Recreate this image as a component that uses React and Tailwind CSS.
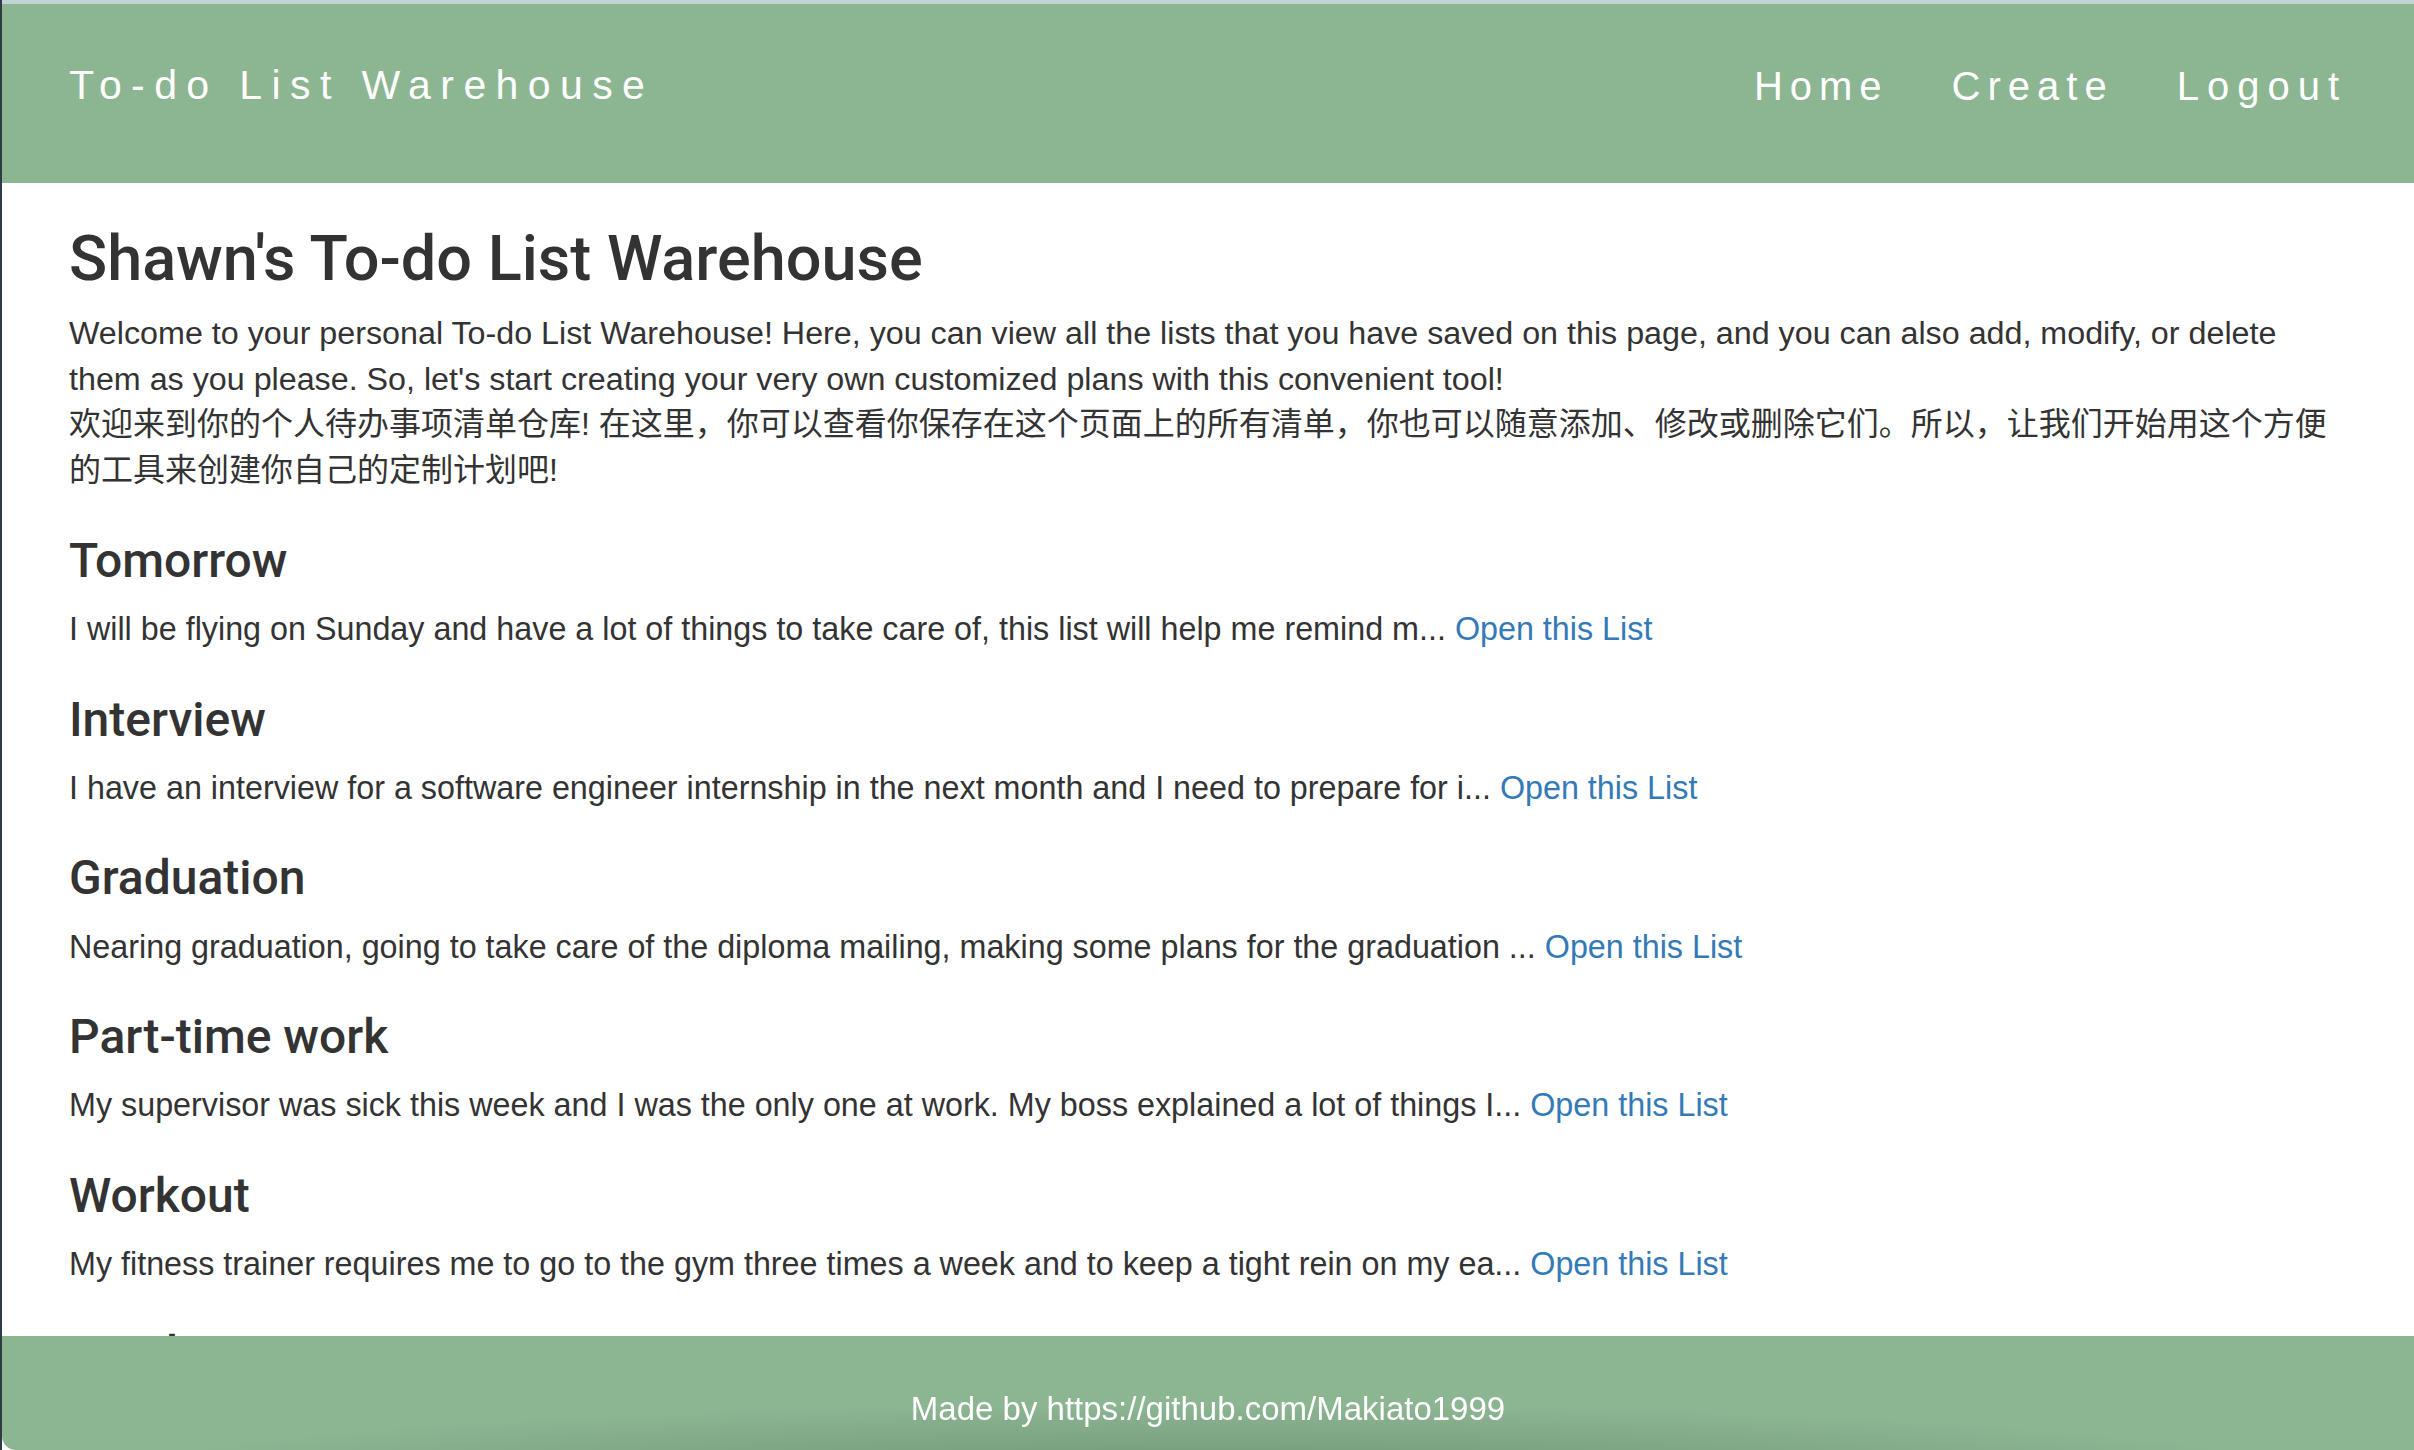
import React from "react";

const LISTS = [
	{
		title: "Tomorrow",
		summary:
			"I will be flying on Sunday and have a lot of things to take care of, this list will help me remind m...",
	},
	{
		title: "Interview",
		summary:
			"I have an interview for a software engineer internship in the next month and I need to prepare for i...",
	},
	{
		title: "Graduation",
		summary:
			"Nearing graduation, going to take care of the diploma mailing, making some plans for the graduation ...",
	},
	{
		title: "Part-time work",
		summary:
			"My supervisor was sick this week and I was the only one at work. My boss explained a lot of things I...",
	},
	{
		title: "Workout",
		summary:
			"My fitness trainer requires me to go to the gym three times a week and to keep a tight rein on my ea...",
	},
	{
		title: "Reading",
		summary:
			"There are a few books I want to finish before the semester starts, so I wrote them down here to...",
	},
];

const NAV = [
	{ label: "Home", track: "tracking-[7px]" },
	{ label: "Create", track: "tracking-[7px]" },
	{ label: "Logout", track: "tracking-[8px]" },
];

export default function App() {
	return (
		<div className="min-h-screen bg-white border-l-2 border-[#2f3a45] font-['Helvetica_Neue','Liberation_Sans',Arial,'Noto_Sans_CJK_SC',sans-serif] text-[#333]">
			{/* top window strip */}
			<div className="h-[4px] bg-[#c3d2d6]" />

			{/* NAVBAR */}
			<header className="h-[179px] bg-[#8cb592] flex items-center justify-between pl-[67px] pr-[67px] text-white">
				<span className="text-[41px] tracking-[9.4px] leading-none -mt-[16px]">
					To-do List Warehouse
				</span>
				<nav className="flex gap-[63px] -mt-[16px]">
					{NAV.map((item) => (
						<a key={item.label} className={`text-[40px] leading-none ${item.track}`}>
							{item.label}
						</a>
					))}
				</nav>
			</header>

			{/* CONTENT */}
			<main className="pl-[67px] pr-[30px] pb-[200px]">
				<h2 className="mt-[41px] mb-[18px] font-['Roboto','Liberation_Sans',sans-serif] text-[63px] font-medium leading-[1.1]">
					Shawn's To-do List Warehouse
				</h2>
				<p className="text-[32.25px] leading-[45.4px]">
					Welcome to your personal To-do List Warehouse! Here, you can view all the lists that you have
					saved on this page, and you can also add, modify, or delete
					<br />
					them as you please. So, let's start creating your very own customized plans with this
					convenient tool!
					<br />
					<span className="whitespace-nowrap text-[32px]">
						欢迎来到你的个人待办事项清单仓库! 在这里，你可以查看你保存在这个页面上的所有清单，你也可以随意添加、修改或删除它们。所以，让我们开始用这个方便
					</span>
					<br />
					<span className="text-[32px]">的工具来创建你自己的定制计划吧!</span>
				</p>

				<div className="mt-[42px] flex flex-col gap-[41px]">
					{LISTS.map((list) => (
						<section key={list.title}>
							<h3 className="font-['Roboto','Liberation_Sans',sans-serif] text-[48px] font-medium leading-[1.1]">
								{list.title}
							</h3>
							<p className="mt-[19.5px] text-[32.3px] leading-[45.4px]">
								{list.summary}{" "}
								<a className="text-[#337ab7]">Open this List</a>
							</p>
						</section>
					))}
				</div>
			</main>

			{/* FOOTER */}
			<footer className="fixed bottom-0 left-[2px] right-0 h-[114px] rounded-bl-[14px] bg-[#8cb592] bg-[radial-gradient(ellipse_45%_60%_at_50%_120%,rgba(60,90,65,0.35),rgba(60,90,65,0))] flex items-center justify-center pt-[32px]">
				<span className="text-[33px] text-white">Made by https://github.com/Makiato1999</span>
			</footer>
		</div>
	);
}
